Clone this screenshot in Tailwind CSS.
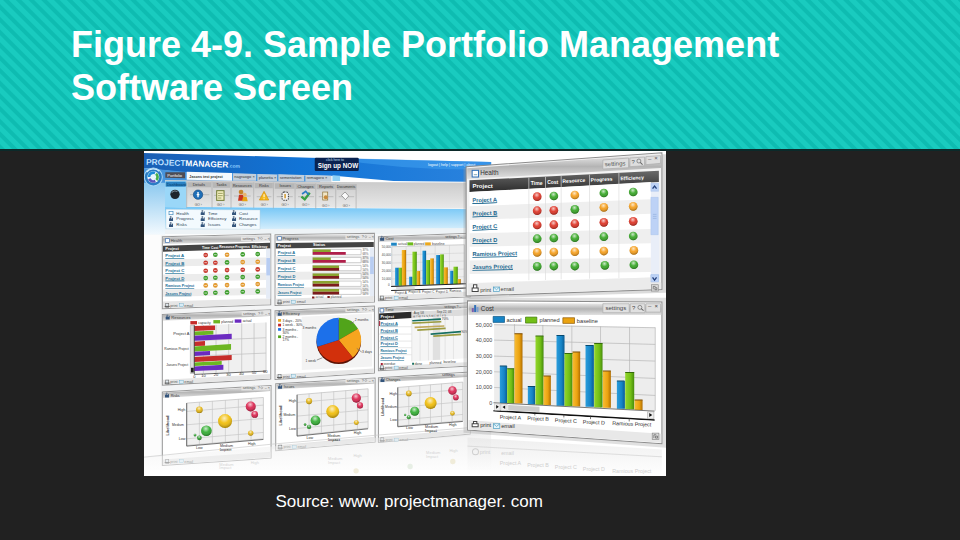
<!DOCTYPE html>
<html lang="en">
  <head>
    <meta charset="UTF-8" />
    <meta name="viewport" content="width=device-width, initial-scale=1.0" />
    <title>Sample Portfolio Management Software Screen</title>
    <script src="https://cdn.jsdelivr.net/npm/@tailwindcss/browser@4"></script>
  </head>
  <body class="min-h-screen bg-[#212121] font-['Liberation_Sans',Arial,sans-serif] text-white">
    <header
      class="bg-[repeating-linear-gradient(45deg,#0ebcb1_0px,#0ebcb1_3px,#19cbbf_4px,#19cbbf_8px,#0ebcb1_9px)] px-[71px] pt-[23px] pb-10"
    >
      <h1 class="text-[36px] leading-[43px] font-bold">
        Figure 4-9. Sample Portfolio Management Software Screen
      </h1>
    </header>

    <main class="border-t-2 border-[#0b2a2a]">
      <figure class="ml-[15%] w-[54.4%]">
        <svg viewBox="0 0 1566 975" class="block w-full bg-white" role="img" aria-label="Project dashboard">
          <defs>
            <linearGradient id="sky" x1="0" y1="0" x2="1" y2="0">
              <stop offset="0" stop-color="#1a5fb4" />
              <stop offset=".45" stop-color="#1174d6" />
              <stop offset="1" stop-color="#2b83de" />
            </linearGradient>
            <linearGradient id="strip" x1="0" y1="0" x2="0" y2="1">
              <stop offset="0" stop-color="#74c6f6" />
              <stop offset="1" stop-color="#e6f5fd" />
            </linearGradient>
            <linearGradient id="side" x1="0" y1="0" x2="0" y2="1">
              <stop offset="0" stop-color="#8cc9f0" />
              <stop offset="1" stop-color="#f4fafe" />
            </linearGradient>
            <linearGradient id="tools" x1="0" y1="0" x2="0" y2="1">
              <stop offset="0" stop-color="#c9c9c9" />
              <stop offset="1" stop-color="#e9e9e9" />
            </linearGradient>
            <linearGradient id="bar" x1="0" y1="0" x2="0" y2="1">
              <stop offset="0" stop-color="#eeeeee" />
              <stop offset=".5" stop-color="#b4b4b4" />
              <stop offset="1" stop-color="#e2e2e2" />
            </linearGradient>
            <linearGradient id="dark" x1="0" y1="0" x2="0" y2="1">
              <stop offset="0" stop-color="#6a6a6a" />
              <stop offset="1" stop-color="#2c2c2c" />
            </linearGradient>
            <linearGradient id="blue">
              <stop offset="0" stop-color="#2a9ddc" />
              <stop offset=".6" stop-color="#1684c6" />
              <stop offset="1" stop-color="#0a5c94" />
            </linearGradient>
            <linearGradient id="green">
              <stop offset="0" stop-color="#93d62c" />
              <stop offset=".6" stop-color="#72bf16" />
              <stop offset="1" stop-color="#468c0c" />
            </linearGradient>
            <linearGradient id="orange">
              <stop offset="0" stop-color="#f9bd35" />
              <stop offset=".6" stop-color="#eaa20f" />
              <stop offset="1" stop-color="#b06d02" />
            </linearGradient>
            <radialGradient id="shine" cx=".45" cy=".3" r=".7">
              <stop offset="0" stop-color="#fff" stop-opacity=".75" />
              <stop offset=".5" stop-color="#fff" stop-opacity=".1" />
              <stop offset="1" stop-color="#000" stop-opacity=".35" />
            </radialGradient>
            <linearGradient id="fade" x1="0" y1="0" x2="0" y2="1">
              <stop offset="0" stop-color="#e4e4e4" />
              <stop offset="1" stop-color="#ffffff" />
            </linearGradient>
            <g id="dot"><circle r="13" /><circle r="13" fill="url(#shine)" /></g>
            <g id="mini"><circle r="7" /><path d="M-4 0H4" stroke="#fff" stroke-width="2" /></g>
            <g id="ball"><circle r="10" /><circle r="10" fill="url(#shine)" /></g>
            <g id="bubbles">
              <use href="#ball" transform="translate(0 0)" fill="#e3b20c" />
              <use href="#ball" transform="translate(154 -10) scale(1.5)" fill="#d91c48" />
              <use href="#ball" transform="translate(166 14)" fill="#d91c48" />
              <use href="#ball" transform="translate(77 34) scale(2.1)" fill="#f0bb00" />
              <use href="#ball" transform="translate(21 63) scale(1.6)" fill="#2bab2b" />
              <use href="#ball" transform="translate(0 84) scale(.7)" fill="#2b9a2b" />
              <use href="#ball" transform="translate(-13 76) scale(.4)" fill="#2b9a2b" />
              <use href="#ball" transform="translate(154 70) scale(.8)" fill="#e3b20c" />
            </g>
            <g id="page">
              <rect width="9" height="12" fill="#dfe8ee" stroke="#777" stroke-width="2" />
              <path d="M-3 9H12" stroke="#555" stroke-width="3" />
            </g>
            <g id="people">
              <path d="M0 14V7L4 4L8 7L12 2V14Z" fill="#34557c" />
              <circle cx="5" cy="2" r="3" fill="#6c7f96" />
            </g>
            <g id="foot" font-size="11" fill="#555">
              <use href="#page" y="-10" />
              <text x="14">print</text>
              <rect x="41" y="-9" width="12" height="9" fill="#d8ecf6" stroke="#4a9cc0" />
              <text x="56">email</text>
            </g>
            <g id="ctl" font-size="11" fill="#555">
              <rect x="-4" y="-10" width="84" height="13" fill="#e4e4e4" />
              <text>settings</text>
              <text x="45">?</text>
              <circle cx="57" cy="-5" r="3" fill="none" stroke="#666" />
              <text x="66">– ×</text>
            </g>
          </defs>

          <!-- Application header -->
          <g transform="translate(-12 -15)">
            <path d="M12 21L510 35L1053 48V108L760 105L590 90L140 80L12 66Z" fill="url(#sky)" />
            <path d="M12 66L140 78L540 90V115H12Z" fill="#4794dc" />
            <path d="M560 35L1053 48V70Q800 75 560 35Z" fill="#3fa0f0" opacity=".55" />
            <path d="M12 110H75V268H12Z" fill="url(#side)" />
            <path d="M75 102L600 108L1053 110V188L75 182Z" fill="url(#tools)" />
            <path d="M75 182L1053 190V256L75 262Z" fill="url(#strip)" />
            <path d="M75 250L1053 246V266L75 264Z" fill="#eef3f6" />
            <g font-weight="bold" transform="rotate(2 18 56)">
              <text x="18" y="56" font-size="25" fill="#bfe0ff">PROJECT<tspan fill="#fff">MANAGER</tspan><tspan font-size="15" fill="#8ccbff">.com</tspan></text>
            </g>
            <circle cx="40" cy="93" r="27" fill="#2a7cc4" stroke="#a8d6f6" stroke-width="3" />
            <circle cx="40" cy="93" r="18" fill="#e8f6fc" />
            <g fill="none" stroke-width="8">
              <path d="M27 93A13 13 0 0 1 45 81" stroke="#1c8ad8" />
              <path d="M48 83A13 13 0 0 1 49 102" stroke="#49b04b" />
              <path d="M46 105A13 13 0 0 1 28 98" stroke="#5a55bd" />
            </g>
            <path d="M20 78A26 26 0 0 1 58 76" fill="none" stroke="#d6efff" stroke-width="4" />
            <rect x="524" y="35" width="132" height="40" rx="4" fill="#0a2350" />
            <text x="558" y="44" font-size="10" fill="#cfe4ff">click here to</text>
            <text x="533" y="65" font-size="19" font-weight="bold" fill="#fff">Sign up NOW</text>
            <text x="864" y="60" font-size="11" fill="#fff">logout | help | support | about</text>

            <!-- Tabs -->
            <path d="M76 79H135V97L76 95Z" fill="#4d4d55" />
            <path d="M140 77L276 81V104L140 101Z" fill="#f6fafd" />
            <path d="M279 82L348 84V104H279ZM352 84L411 86V105H352ZM415 85L492 87V106H415ZM496 87L574 89V107H496Z" fill="#c3cfdb" />
            <path d="M577 88L600 89V105H577Z" fill="#8ed0f5" />
            <g font-size="12" fill="#333">
              <text x="82" y="92" fill="#fff">Portfolio</text>
              <text x="148" y="95" font-weight="bold" font-size="11">Jasons test project</text>
              <text x="283" y="97">nagraogo ×</text>
              <text x="356" y="98">planetta ×</text>
              <text x="419" y="98">sementation</text>
              <text x="500" y="100">remagoro ×</text>
            </g>

            <!-- Toolbar -->
            <path d="M75 104H139V187L75 184Z" fill="#9ad7f8" />
            <path d="M77 107H137V122H77Z" fill="#2a82c4" />
            <path d="M143 109H213V124H143ZM219 109H270V125H219ZM276 110H338V126H276ZM344 111H398V127H344ZM404 112H463V128H404ZM467 113H525V129H467ZM530 114H584V130H530ZM590 115H647V131H590Z" fill="#b6b6b6" />
            <g stroke="#aaa" stroke-width="2">
              <path d="M140 107V185M216 107V185M273 108V186M341 109V186M400 110V187M465 111V187M527 112V188M587 113V188M648 114V188" />
              <path d="M150 146H208M222 148H266M282 150H332M350 152H394M410 152H458M474 152H522M536 152H580M596 152H642" />
            </g>
            <g font-size="12" fill="#333">
              <text x="80" y="119" fill="#063a66">Dashboard</text>
              <text x="158" y="121">Details</text>
              <text x="229" y="121">Tasks</text>
              <text x="278" y="122">Resources</text>
              <text x="357" y="123">Risks</text>
              <text x="418" y="123">Issues</text>
              <text x="472" y="125">Changes</text>
              <text x="537" y="126">Reports</text>
              <text x="590" y="126" font-size="11">Documents</text>
            </g>
            <g font-size="10" fill="#555">
              <text x="164" y="179">GO ›</text>
              <text x="231" y="179">GO ›</text>
              <text x="296" y="180">GO ›</text>
              <text x="362" y="180">GO ›</text>
              <text x="424" y="181">GO ›</text>
              <text x="486" y="181">GO ›</text>
              <text x="546" y="182">GO ›</text>
              <text x="608" y="182">GO ›</text>
            </g>
            <circle cx="105" cy="145" r="14" fill="#1f262c" />
            <path d="M95 140A12 12 0 0 1 112 137" stroke="#7a8a94" stroke-width="3" fill="none" />
            <circle cx="174" cy="146" r="14" fill="#1f6fb8" stroke="#174a80" stroke-width="2" />
            <path d="M174 138V154M170 146H178" stroke="#fff" stroke-width="4" />
            <rect x="230" y="134" width="22" height="29" fill="#f4efc0" stroke="#6f7a30" stroke-width="3" />
            <path d="M234 142H248M234 149H248M234 156H244" stroke="#6f7a30" stroke-width="2" />
            <circle cx="303" cy="138" r="7" fill="#c5852a" />
            <path d="M294 164L297 146H309L314 164Z" fill="#c8321e" />
            <circle cx="314" cy="146" r="6" fill="#e8b56e" />
            <path d="M306 166L309 153H320L323 166Z" fill="#e8a214" />
            <path d="M358 162L372 136L386 162Z" fill="#f5b91d" stroke="#d38a08" stroke-width="2" />
            <path d="M372 145V154M372 157V160" stroke="#fff" stroke-width="3" />
            <rect x="426" y="138" width="19" height="25" rx="6" fill="#f4f4f4" stroke="#333" stroke-width="3" stroke-dasharray="4 3" />
            <path d="M435 144V157" stroke="#c98a16" stroke-width="4" />
            <path d="M484 152L494 160L509 140" fill="none" stroke="#37a043" stroke-width="7" />
            <path d="M486 144L497 136L506 146" fill="none" stroke="#2a7cc4" stroke-width="5" />
            <rect x="548" y="138" width="15" height="24" fill="#f0e6c6" stroke="#8a6b2e" stroke-width="2" />
            <circle cx="557" cy="154" r="6" fill="#c98a3a" />
            <path d="M604 148L615 138L626 150L616 161Z" fill="#fafafa" stroke="#777" stroke-width="2" />

            <!-- Sub menu -->
            <path d="M78 190L360 192V250L78 248Z" fill="#f3fafe" stroke="#a9c7d9" />
            <rect x="87" y="196" width="12" height="10" fill="#fff" stroke="#3d86bb" stroke-width="2" />
            <use href="#people" x="87" y="211" />
            <use href="#people" x="87" y="229" />
            <use href="#people" x="182" y="193" />
            <use href="#people" x="182" y="211" />
            <use href="#people" x="182" y="229" />
            <use href="#people" x="276" y="193" />
            <use href="#people" x="276" y="211" />
            <use href="#people" x="276" y="229" />
            <g font-size="13" fill="#2a4254">
              <text x="109" y="206">Health</text>
              <text x="109" y="223">Progress</text>
              <text x="109" y="241">Risks</text>
              <text x="204" y="206">Time</text>
              <text x="204" y="223">Efficiency</text>
              <text x="204" y="241">Issues</text>
              <text x="297" y="206">Cost</text>
              <text x="297" y="223">Resource</text>
              <text x="297" y="241">Changes</text>
            </g>
          </g>

          <!-- Page surface behind the panels -->
          <path d="M0 251H1041V850L0 920Z" fill="#f4f5f6" />
          <path d="M0 251H50V914L0 920Z" fill="#fcfcfc" />

          <!-- Health, small -->
          <g transform="translate(33 237)">
            <path d="M22 20L347 12V224L22 236Z" fill="#fff" stroke="#9a9a9a" stroke-width="3" />
            <path d="M24 22L345 14V33L24 42Z" fill="url(#bar)" />
            <path d="M24 47L345 38V55L24 65Z" fill="#444" />
            <path d="M24 88L333 82V104L24 109ZM24 133L333 128V150L24 155ZM24 178L333 173V194L24 200Z" fill="#ececec" />
            <path d="M24 214L345 205V222L24 234Z" fill="#e6e6e6" />
            <path d="M333 56H346V206H333Z" fill="#e6ecf6" />
            <path d="M334 84H345V136H334Z" fill="#b8cdf2" />
            <rect x="31" y="26" width="12" height="11" fill="#fff" stroke="#3d6fae" stroke-width="2" />
            <use href="#ctl" x="262" y="30" />
            <use href="#foot" x="32" y="230" />
            <text x="47" y="37" font-size="12" fill="#444">Health</text>
            <g font-size="12" font-weight="bold" fill="#fff">
              <text x="31" y="60">Project</text>
              <g font-size="10">
                <text x="141" y="56">Time</text>
                <text x="168" y="56">Cost</text>
                <text x="193" y="55">Resource</text>
                <text x="241" y="54">Progress</text>
                <text x="290" y="53">Efficiency</text>
              </g>
            </g>
            <g font-size="13" font-weight="bold" fill="#1d6f96" class="underline">
              <a href="#"><text x="31" y="82">Project A</text></a>
              <a href="#"><text x="31" y="104">Project B</text></a>
              <a href="#"><text x="31" y="127">Project C</text></a>
              <a href="#"><text x="31" y="149">Project D</text></a>
              <a href="#"><text x="31" y="172" font-size="11">Ramious Project</text></a>
              <a href="#"><text x="31" y="194" font-size="11">Jasuns Project</text></a>
            </g>
            <g fill="#c8362b">
              <use href="#mini" x="152" y="75" /><use href="#mini" x="152" y="98" /><use href="#mini" x="181" y="98" />
              <use href="#mini" x="152" y="122" /><use href="#mini" x="181" y="121" /><use href="#mini" x="216" y="120" />
              <use href="#mini" x="263" y="119" /><use href="#mini" x="308" y="118" />
            </g>
            <g fill="#3c9d2b">
              <use href="#mini" x="181" y="74" /><use href="#mini" x="263" y="73" /><use href="#mini" x="308" y="72" />
              <use href="#mini" x="216" y="97" />
              <use href="#mini" x="152" y="144" /><use href="#mini" x="181" y="143" /><use href="#mini" x="216" y="142" />
              <use href="#mini" x="263" y="141" /><use href="#mini" x="308" y="140" />
              <use href="#mini" x="152" y="189" /><use href="#mini" x="181" y="188" /><use href="#mini" x="216" y="187" />
              <use href="#mini" x="263" y="185" /><use href="#mini" x="308" y="184" />
            </g>
            <g fill="#e2972a">
              <use href="#mini" x="216" y="74" /><use href="#mini" x="263" y="96" /><use href="#mini" x="308" y="95" />
              <use href="#mini" x="152" y="166" /><use href="#mini" x="181" y="166" /><use href="#mini" x="216" y="165" />
              <use href="#mini" x="263" y="164" /><use href="#mini" x="308" y="162" />
            </g>
          </g>

          <!-- Progress -->
          <g transform="translate(378 237)">
            <path d="M15 14L313 10V216L15 226Z" fill="#fff" stroke="#9a9a9a" stroke-width="3" />
            <path d="M17 16L311 12V29L17 34Z" fill="url(#bar)" />
            <path d="M17 39L311 36V51L17 55Z" fill="#444" />
            <path d="M17 79L298 76V99L17 103ZM17 126L298 123V147L17 150ZM17 173L298 170V192L17 196Z" fill="#ececec" />
            <path d="M17 206L311 198V214L17 224Z" fill="#e6e6e6" />
            <path d="M299 53H312V198H299Z" fill="#e6ecf6" />
            <path d="M300 80H311V132H300Z" fill="#b8cdf2" />
            <rect x="23" y="20" width="11" height="10" fill="#fff" stroke="#3d6fae" stroke-width="2" />
            <use href="#ctl" x="230" y="25" />
            <use href="#foot" x="24" y="220" />
            <text x="37" y="31" font-size="12" fill="#444">Progress</text>
            <g font-size="12" font-weight="bold" fill="#fff">
              <text x="22" y="51">Project</text>
              <text x="129" y="49">Status</text>
            </g>
            <g font-size="12" font-weight="bold" fill="#1d6f96" class="underline">
              <a href="#"><text x="23" y="73">Project A</text></a>
              <a href="#"><text x="23" y="97">Project B</text></a>
              <a href="#"><text x="23" y="121">Project C</text></a>
              <a href="#"><text x="23" y="145">Project D</text></a>
              <a href="#"><text x="23" y="168" font-size="10">Ramious Project</text></a>
              <a href="#"><text x="23" y="192" font-size="10">Jasuns Project</text></a>
            </g>
            <path d="M128 58H273V74H128ZM128 82H273V98H128ZM128 106H273V122H128ZM128 130H273V146H128ZM128 153H273V169H128ZM128 177H273V193H128Z" fill="#fff" stroke="#b5b5b5" stroke-width="2" />
            <path d="M128 58H182V66H128ZM128 82H182V90H128ZM128 106H207V114H128ZM128 130H207V138H128ZM128 153H207V161H128ZM128 177H207V185H128Z" fill="#8aa32f" />
            <path d="M128 66H227V74H128ZM128 90H227V98H128Z" fill="#b01f4a" />
            <path d="M128 114H207V122H128ZM128 138H207V146H128ZM128 161H207V169H128ZM128 185H207V193H128Z" fill="#7c1c1c" />
            <g font-size="9" fill="#555">
              <text x="277" y="64">37%</text><text x="277" y="74">68%</text>
              <text x="277" y="88">37%</text><text x="277" y="98">68%</text>
              <text x="277" y="112">54%</text><text x="277" y="122">54%</text>
              <text x="277" y="136">54%</text><text x="277" y="146">54%</text>
              <text x="277" y="160">54%</text><text x="277" y="170">54%</text>
              <text x="277" y="184">54%</text><text x="277" y="194">54%</text>
              <text x="136" y="205">actual</text><text x="182" y="204">planned</text>
            </g>
            <path d="M126 199H133V205H126ZM172 198H179V204H172Z" fill="#7c1c1c" />
          </g>

          <!-- Cost and Time, small -->
          <g transform="translate(678 237)">
            <path d="M25 20L300 10V200L25 212Z" fill="#fff" stroke="#9a9a9a" stroke-width="3" />
            <path d="M27 22L300 12V26L27 36Z" fill="url(#bar)" />
            <path d="M27 196L300 184V199L27 210Z" fill="#e6e6e6" />
            <path d="M65 50L283 44V160L65 168Z" fill="#eeeeee" stroke="#bbb" stroke-width="2" />
            <path d="M65 75L283 69M65 99L283 93M65 124L283 117M65 147L283 140M108 49V166M152 48V165M195 47V163M238 46V162" stroke="#bbb" />
            <path d="M63 38H80V47H63Z" fill="#2086c4" /><path d="M112 37H129V46H112Z" fill="#6cbb1c" /><path d="M165 37H182V46H165Z" fill="#eca81c" />
            <g fill="url(#blue)">
              <rect x="75" y="113" width="11" height="54" /><rect x="117" y="140" width="10" height="26" />
              <rect x="157" y="62" width="11" height="102" /><rect x="198" y="75" width="12" height="88" />
              <rect x="240" y="122" width="10" height="40" />
            </g>
            <g fill="url(#green)">
              <rect x="86" y="113" width="10" height="54" /><rect x="127" y="65" width="13" height="101" />
              <rect x="168" y="90" width="12" height="74" /><rect x="210" y="73" width="11" height="90" />
              <rect x="250" y="110" width="13" height="52" />
            </g>
            <g fill="url(#orange)">
              <rect x="95" y="60" width="13" height="107" /><rect x="140" y="123" width="10" height="42" />
              <rect x="180" y="85" width="11" height="79" /><rect x="221" y="112" width="12" height="51" />
              <rect x="263" y="147" width="9" height="15" />
            </g>
            <path d="M63 169L288 161M63 181L288 174" stroke="#222" stroke-width="3" />
            <path d="M78 171H134V178H78Z" fill="#ddd" />
            <use href="#people" x="30" y="18" />
            <use href="#foot" x="31" y="208" />
            <g font-size="10" fill="#444">
              <text x="46" y="31" font-size="12">Cost</text>
              <text x="225" y="25">settings ? –</text>
              <text x="84" y="46">actual</text><text x="131" y="46" font-size="9">planned</text><text x="186" y="45">baseline</text>
              <text x="35" y="54" font-size="9">50,000</text><text x="35" y="78" font-size="9">40,000</text><text x="35" y="102" font-size="9">30,000</text>
              <text x="35" y="127" font-size="9">20,000</text><text x="35" y="150" font-size="9">10,000</text><text x="54" y="169" font-size="9">0</text>
              <text x="74" y="191" font-size="9">Project A</text><text x="115" y="190" font-size="9">Project B</text><text x="156" y="189" font-size="9">Project C</text>
              <text x="197" y="188" font-size="9">Project D</text><text x="238" y="187" font-size="9">Ramious</text>
            </g>

            <path d="M25 234L300 218V408L25 422Z" fill="#fff" stroke="#9a9a9a" stroke-width="3" />
            <path d="M27 236L300 220V234L27 247Z" fill="url(#bar)" />
            <path d="M27 250L125 245V264L27 270Z" fill="#2c2c2c" />
            <path d="M125 245L300 236V256L125 264Z" fill="#dcdcdc" />
            <path d="M125 264L300 256V384L125 394Z" fill="#f5f5f5" />
            <path d="M188 262L210 261V389L188 390Z" fill="#e0e0e0" />
            <path d="M125 245V394M150 256V392M175 255V391M225 253V388M250 252V387M27 290H125M27 312H125M27 333H125M27 353H125M27 374H125" stroke="#ddd" stroke-width="2" />
            <path d="M27 410L300 396V406L27 420Z" fill="#e6e6e6" />
            <rect x="30" y="236" width="11" height="10" fill="#fff" stroke="#3d6fae" stroke-width="2" />
            <use href="#foot" x="31" y="417" />
            <g stroke-width="5" stroke-linecap="square">
              <path d="M129 272L210 267M184 312L270 305" stroke="#176f62" />
              <path d="M129 279L211 275M144 300L224 295M192 318L270 313" stroke="#9b9c42" />
              <path d="M136 292L220 288" stroke="#c2a95c" />
            </g>
            <g font-size="10" fill="#444">
              <text x="45" y="244" font-size="12">Time</text>
              <text x="222" y="233">settings ? –</text>
              <text x="31" y="263" font-size="12" font-weight="bold" fill="#fff">Project</text>
              <text x="131" y="252" font-size="9">Aug '08</text><text x="200" y="248" font-size="9">Sep 22, 08</text>
              <text x="129" y="262" font-size="8" transform="rotate(-2 129 262)">M T W T F S S M T W T F S</text>
              <text x="215" y="270">70%</text><text x="273" y="308">90%</text>
              <text x="40" y="406">overdue</text><text x="134" y="404">done</text><text x="178" y="401">planned</text><text x="220" y="399">baseline</text>
            </g>
            <path d="M32 399H38V405H32ZM27 272H30V288H27Z" fill="#a31f36" /><path d="M126 398H132V404H126Z" fill="#176f62" />
            <g font-size="12" font-weight="bold" fill="#1d6f96" class="underline">
              <a href="#"><text x="31" y="284">Project A</text></a>
              <a href="#"><text x="31" y="305">Project B</text></a>
              <a href="#"><text x="31" y="326">Project C</text></a>
              <a href="#"><text x="31" y="346">Project D</text></a>
              <a href="#"><text x="31" y="366" font-size="10">Ramious Project</text></a>
              <a href="#"><text x="31" y="387" font-size="10">Jasuns Project</text></a>
            </g>
          </g>

          <!-- Resources -->
          <g transform="translate(33 462)">
            <path d="M22 28L347 14V222L22 240Z" fill="#fff" stroke="#9a9a9a" stroke-width="3" />
            <path d="M24 30L345 16V33L24 47Z" fill="url(#bar)" />
            <path d="M24 224L345 207V220L24 238Z" fill="#e6e6e6" />
            <path d="M118 62L333 52V198L118 206Z" fill="#f0f0f0" />
            <path d="M145 60V205M183 59V203M221 57V202M260 55V201M297 54V199M333 52V198M118 107L333 98M118 153L333 144" stroke="#bdbdbd" stroke-width="2" />
            <path d="M106 61H117V205H106Z" fill="#ddd" stroke="#777" />
            <path d="M108 188H116V202H108Z" fill="#222" />
            <path d="M106 48H126V58H106Z" fill="#c62d2a" /><path d="M175 45H195V55H175Z" fill="#6cb622" /><path d="M239 43H259V53H239Z" fill="#6b2bc0" />
            <path d="M118 63L180 61V75L118 78ZM118 110L150 108V122L118 123ZM118 156L230 150V165L118 171Z" fill="#c62d2a" />
            <path d="M118 79L175 77V88L118 91ZM118 124L228 117V134L118 139ZM118 172L200 168V179L118 183Z" fill="#6cb622" />
            <path d="M118 92L230 86V102L118 107ZM118 140L165 138V150L118 153ZM118 184L205 179V194L118 198Z" fill="#6b2bc0" />
            <path d="M118 60V208L333 198" stroke="#222" stroke-width="2" fill="none" />
            <use href="#people" x="32" y="29" />
            <use href="#ctl" x="264" y="29" />
            <use href="#foot" x="32" y="235" />
            <g font-size="12" fill="#333">
              <text x="49" y="41">Resources</text>
              <g font-size="10"><text x="130" y="56">capacity</text><text x="199" y="53">planned</text><text x="263" y="51">actual</text></g>
              <text x="55" y="90">Project A</text>
              <text x="28" y="136" font-size="10">Ramious Project</text>
              <text x="34" y="184" font-size="10">Jasuns Project</text>
              <text x="115" y="218">0</text><text x="139" y="216">10</text><text x="176" y="214">20</text>
              <text x="214" y="212">30</text><text x="253" y="210">40</text><text x="290" y="208">50</text><text x="324" y="205">60</text>
            </g>
          </g>

          <!-- Efficiency -->
          <g transform="translate(378 462)">
            <path d="M15 17L313 3V204L15 223Z" fill="#fff" stroke="#9a9a9a" stroke-width="3" />
            <path d="M17 19L311 5V21L17 34Z" fill="url(#bar)" />
            <path d="M17 208L311 190V202L17 221Z" fill="#e6e6e6" />
            <path d="M95 35L306 25V184L95 195Z" fill="#f3f3f3" />
            <circle cx="206" cy="110" r="67" fill="#5b1205" />
            <path d="M206 105V38A67 67 0 0 1 264 71Z" fill="#51a41a" />
            <path d="M206 105L264 71A67 67 0 0 1 248 157Z" fill="#f6a51f" />
            <path d="M206 105L248 157A67 67 0 0 1 142 125Z" fill="#d2300c" />
            <path d="M206 105L142 125A67 67 0 0 1 206 38Z" fill="#1c70ea" />
            <path d="M24 42H33V50H24Z" fill="#e6a81f" /><path d="M24 56H33V64H24Z" fill="#c62d2a" />
            <path d="M24 69H33V77H24Z" fill="#1c70ea" /><path d="M24 91H33V99H24Z" fill="#51a41a" />
            <use href="#people" x="23" y="18" />
            <use href="#ctl" x="230" y="18" />
            <use href="#foot" x="24" y="218" />
            <g font-size="11" fill="#333">
              <text x="38" y="29" font-size="12">Efficiency</text>
              <text x="37" y="50" font-size="10">3 days - 20%</text><text x="37" y="64" font-size="10">1 week - 30%</text>
              <text x="37" y="77" font-size="10">3 months -</text><text x="37" y="87" font-size="10">30%</text>
              <text x="37" y="99" font-size="10">2 months -</text><text x="37" y="109" font-size="10">17%</text>
              <text x="97" y="71" font-size="10">3 months</text><text x="254" y="49" font-size="10">2 months</text>
              <text x="106" y="172" font-size="10">1 week</text><text x="276" y="145" font-size="10">3 days</text>
            </g>
            <path d="M140 165L157 158M275 141L260 130M252 50L240 56" stroke="#666" stroke-width="2" />
          </g>

          <!-- Risks -->
          <g transform="translate(-12 681)">
            <path d="M67 42L393 22V240L67 262Z" fill="#fff" stroke="#9a9a9a" stroke-width="3" />
            <path d="M69 44L391 24V39L69 60Z" fill="url(#bar)" />
            <path d="M69 244L391 221V238L69 260Z" fill="#e6e6e6" />
            <path d="M140 75L370 58V182L140 202Z" fill="#f0f0f0" stroke="#bbb" stroke-width="2" />
            <path d="M178 72V199M217 69V195M256 66V192M295 63V189M333 60V185M140 100L370 81M140 140L370 121M140 182L370 163" stroke="#c4c4c4" stroke-width="2" />
            <path d="M140 75V204L370 184" stroke="#333" stroke-width="2" fill="none" />
            <use href="#bubbles" x="178" y="95" />
            <use href="#people" x="75" y="44" />
            <use href="#ctl" x="308" y="34" />
            <use href="#foot" x="77" y="254" />
            <g font-size="11" fill="#333">
              <text x="92" y="56">Risks</text>
              <text x="113" y="98">High</text><text x="96" y="143" font-size="10">Medium</text><text x="116" y="187">Low</text>
              <text x="168" y="214">Low</text><text x="240" y="207">Medium</text><text x="324" y="200">High</text>
              <text x="239" y="220" font-weight="bold">Impact</text>
              <text transform="translate(88 172) rotate(-90)" font-weight="bold" font-size="12">Likelihood</text>
            </g>
          </g>

          <!-- Issues -->
          <g transform="translate(320 655)">
            <path d="M75 43L373 26V218L75 244Z" fill="#fff" stroke="#9a9a9a" stroke-width="3" />
            <path d="M77 45L371 28V42L77 60Z" fill="url(#bar)" />
            <path d="M77 227L371 202V216L77 242Z" fill="#e6e6e6" />
            <path d="M139 76L352 58V176L139 198Z" fill="#f0f0f0" stroke="#bbb" stroke-width="2" />
            <path d="M175 73V194M212 69V190M249 66V186M285 63V182M320 60V179M139 99L352 81M139 140L352 121M139 177L352 157" stroke="#c4c4c4" stroke-width="2" />
            <path d="M139 76V200L352 178" stroke="#333" stroke-width="2" fill="none" />
            <use href="#bubbles" transform="translate(175 95) scale(.92)" />
            <use href="#people" x="82" y="44" />
            <use href="#ctl" x="288" y="38" />
            <use href="#foot" x="84" y="237" />
            <g font-size="11" fill="#333">
              <text x="99" y="57">Issues</text>
              <text x="114" y="99">High</text><text x="98" y="141" font-size="10">Medium</text><text x="115" y="182">Low</text>
              <text x="167" y="209">Low</text><text x="230" y="202">Medium</text><text x="309" y="195">High</text>
              <text x="232" y="214" font-weight="bold">Impact</text>
              <text transform="translate(93 168) rotate(-90)" font-weight="bold" font-size="12">Likelihood</text>
            </g>
          </g>

          <!-- Changes -->
          <g transform="translate(498 681)">
            <path d="M205 -1L480 -18V168L205 193Z" fill="#fff" stroke="#9a9a9a" stroke-width="3" />
            <path d="M207 1L480 -16V-4L207 13Z" fill="url(#bar)" />
            <path d="M207 177L480 153V166L207 191Z" fill="#e6e6e6" />
            <path d="M263 28L458 12V128L263 144Z" fill="#f0f0f0" stroke="#bbb" stroke-width="2" />
            <path d="M296 26V140M329 23V138M361 20V135M394 17V132M426 15V130M263 50L458 34M263 88L458 71M263 126L458 109" stroke="#c4c4c4" stroke-width="2" />
            <path d="M263 28V146L458 130" stroke="#333" stroke-width="2" fill="none" />
            <use href="#bubbles" transform="translate(296 46) scale(.85)" />
            <use href="#people" x="211" y="-2" />
            <use href="#foot" x="212" y="189" />
            <g font-size="11" fill="#333">
              <text x="227" y="9">Changes</text><text x="396" y="-5">settings</text>
              <text x="238" y="50">High</text><text x="225" y="90" font-size="10">Medium</text><text x="240" y="129">Low</text>
              <text x="288" y="154">Low</text><text x="345" y="149">Medium</text><text x="417" y="144">High</text>
              <text x="345" y="161" font-weight="bold">Impact</text>
              <text transform="translate(222 114) rotate(-90)" font-weight="bold" font-size="11">Likelihood</text>
            </g>
          </g>

          <!-- Floor reflection -->
          <path d="M0 918L1041 832V975H0Z" fill="url(#fade)" opacity=".5" />
          <path d="M0 918L385 879L700 852L972 830" fill="none" stroke="#c8c8c8" stroke-width="2" />
          <g font-size="12" fill="#d4d4d4">
            <text x="226" y="955">Impact</text><text x="226" y="944">Medium</text><text x="320" y="938">High</text>
            <text x="552" y="938">Impact</text><text x="552" y="926">Medium</text><text x="628" y="918">High</text>
            <text x="846" y="921">Impact</text><text x="846" y="909">Medium</text><text x="916" y="902">High</text>
          </g>
          <g fill="#ece6cc" opacity=".7">
            <circle cx="636" cy="959" r="8" /><circle cx="926" cy="931" r="8" /><circle cx="798" cy="946" r="8" fill="#dfeadc" />
          </g>

          <!-- Health, large -->
          <g transform="translate(948 -15)">
            <path d="M30 458L618 440V25H606L10 66V450Z" fill="#999" opacity=".35" />
            <path d="M18 62L605 20V430L18 450Z" fill="#f4f4f4" stroke="#8c8c8c" stroke-width="3" />
            <path d="M21 67L603 24V66L21 99Z" fill="url(#bar)" />
            <path d="M28 103L596 74V108L28 138Z" fill="url(#dark)" />
            <path d="M28 138L572 108V394L28 411Z" fill="#fff" />
            <path d="M28 181L572 160V203L28 222ZM28 262L572 249V292L28 302ZM28 343L572 334V378L28 384Z" fill="#efefef" />
            <path d="M206 95V403M256 93V402M303 90V400M388 86V398M476 81V396" stroke="#dcdcdc" stroke-width="2" />
            <path d="M572 110H597V410H572Z" fill="#e9eef8" />
            <path d="M572 112H595V136H572ZM572 154H594V266H572ZM572 386H595V408H572Z" fill="#bdd2f6" stroke="#9cb8e6" />
            <path d="M577 128L583 120L589 128M577 394L583 402L589 394" fill="none" stroke="#24427c" stroke-width="4" />
            <path d="M578 205H589M578 211H589M578 217H589" stroke="#93aede" stroke-width="2" />
            <path d="M428 42L505 36V65L428 69ZM509 36L553 33V59L509 62ZM557 32L601 29V52L557 56Z" fill="#dedede" stroke="#aaa" stroke-width="2" />
            <g fill="#555" font-size="18">
              <text x="434" y="61" transform="rotate(-3 434 61)">settings</text>
              <text x="514" y="55">?</text>
              <text x="563" y="45">–</text><text x="582" y="43">×</text>
            </g>
            <circle cx="536" cy="45" r="6" fill="none" stroke="#666" stroke-width="2" /><path d="M540 49L547 56" stroke="#666" stroke-width="3" />
            <rect x="36" y="73" width="19" height="20" fill="#fff" stroke="#2f6fb8" stroke-width="3" />
            <path d="M41 86H51" stroke="#8ab" stroke-width="3" />
            <text x="60" y="87" font-size="19" fill="#333">Health</text>
            <g font-weight="bold" font-size="18" fill="#fff">
              <text x="37" y="127">Project</text>
              <g font-size="15">
                <text x="212" y="116">Time</text>
                <text x="261" y="113">Cost</text>
                <text x="307" y="111" transform="rotate(-3 307 111)">Resource</text>
                <text x="392" y="107" transform="rotate(-3 392 107)">Progress</text>
                <text x="481" y="103" transform="rotate(-3 481 103)">Efficiency</text>
              </g>
            </g>
            <g font-size="17" font-weight="bold" fill="#1a668e" class="underline">
              <a href="#"><text x="37" y="169" transform="rotate(-2 37 169)">Project A</text></a>
              <a href="#"><text x="37" y="209" transform="rotate(-2 37 209)">Project B</text></a>
              <a href="#"><text x="37" y="249" transform="rotate(-2 37 249)">Project C</text></a>
              <a href="#"><text x="37" y="289" transform="rotate(-1 37 289)">Project D</text></a>
              <a href="#"><text x="37" y="330" transform="rotate(-1 37 330)">Ramious Project</text></a>
              <a href="#"><text x="37" y="369" transform="rotate(-1 37 369)">Jasuns Project</text></a>
            </g>
            <g fill="#dc2b1c">
              <use href="#dot" x="231" y="152" /><use href="#dot" x="231" y="194" /><use href="#dot" x="281" y="193" />
              <use href="#dot" x="231" y="237" /><use href="#dot" x="281" y="236" /><use href="#dot" x="344" y="233" />
              <use href="#dot" x="431" y="229" /><use href="#dot" x="519" y="226" />
            </g>
            <g fill="#2fa31d">
              <use href="#dot" x="281" y="150" /><use href="#dot" x="431" y="141" /><use href="#dot" x="519" y="138" />
              <use href="#dot" x="344" y="190" />
              <use href="#dot" x="231" y="278" /><use href="#dot" x="281" y="276" /><use href="#dot" x="344" y="275" />
              <use href="#dot" x="431" y="272" /><use href="#dot" x="519" y="270" />
              <use href="#dot" x="231" y="361" /><use href="#dot" x="281" y="360" /><use href="#dot" x="344" y="360" />
              <use href="#dot" x="434" y="358" /><use href="#dot" x="521" y="356" />
            </g>
            <g fill="#f59a12">
              <use href="#dot" x="344" y="147" /><use href="#dot" x="431" y="184" /><use href="#dot" x="519" y="181" />
              <use href="#dot" x="231" y="319" /><use href="#dot" x="281" y="318" /><use href="#dot" x="344" y="317" />
              <use href="#dot" x="431" y="315" /><use href="#dot" x="521" y="313" />
            </g>
            <path d="M24 412L572 394L603 410V428L24 447Z" fill="#ebebeb" />
            <path d="M40 426V416H50V426M36 426H54V436H36Z" fill="#fff" stroke="#444" stroke-width="3" />
            <rect x="100" y="423" width="18" height="13" fill="#e4f4fb" stroke="#4a9cc0" stroke-width="2" />
            <path d="M100 423L109 431L118 423" fill="none" stroke="#4a9cc0" stroke-width="2" />
            <g font-size="17" fill="#444"><text x="60" y="437">print</text><text x="121" y="435">email</text></g>
            <rect x="574" y="416" width="20" height="19" fill="#ddd" stroke="#888" stroke-width="2" />
            <path d="M579 430V421H586M584 425H590V431H584Z" fill="none" stroke="#555" stroke-width="2" />
            <path d="M572 386H595V408H572Z" fill="#bdd2f6" stroke="#9cb8e6" />
            <path d="M577 394L583 402L589 394" fill="none" stroke="#24427c" stroke-width="4" />
          </g>

          <!-- Cost, large -->
          <g transform="translate(948 435)">
            <path d="M10 5H618V455L10 410Z" fill="#999" opacity=".3" />
            <path d="M22 14L605 18V443L22 402Z" fill="#fff" stroke="#8c8c8c" stroke-width="3" />
            <path d="M25 20L603 23V57H25Z" fill="url(#bar)" />
            <path d="M428 23H507V50H428ZM510 23H554V50H510ZM557 23H601V48H557Z" fill="#e0e0e0" stroke="#aaa" stroke-width="2" />
            <g fill="#444" font-size="18">
              <text x="436" y="42">settings</text><text x="515" y="42">?</text><text x="563" y="36">–</text><text x="583" y="37">×</text>
            </g>
            <circle cx="539" cy="34" r="6" fill="none" stroke="#666" stroke-width="2" /><path d="M543 38L550 44" stroke="#666" stroke-width="3" />
            <path d="M35 36H41V48H35Z" fill="#7c5fae" /><path d="M42 27H48V48H42Z" fill="#2f6fb8" /><path d="M49 33H55V48H49Z" fill="#7c9fd0" />
            <text x="62" y="44" font-size="19" fill="#333">Cost</text>
            <path d="M102 83L585 94V344L102 320Z" fill="#ededed" />
            <path d="M102 86L585 95M102 132L585 145M102 180L585 195M102 227L585 247M102 274L585 298M163 84V322M248 87V326M335 89V330M421 91V335M508 93V340M585 94V344" stroke="#b4b4b4" stroke-width="2" />
            <path d="M99 61H133V79H99Z" fill="#1684c6" stroke="#084e7c" stroke-width="2" />
            <path d="M196 63H230V81H196Z" fill="#72bf16" stroke="#3b720b" stroke-width="2" />
            <path d="M308 65H343V82H308Z" fill="#eaa20f" stroke="#8a5503" stroke-width="2" />
            <g font-size="17" fill="#333">
              <text x="139" y="78">actual</text><text x="238" y="79">planned</text><text x="350" y="80">baseline</text>
            </g>
            <g font-size="16" fill="#444" text-anchor="end">
              <text x="96" y="92">50,000</text><text x="96" y="138">40,000</text><text x="96" y="186">30,000</text>
              <text x="96" y="233">20,000</text><text x="96" y="280">10,000</text><text x="96" y="328">0</text>
            </g>
            <g fill="url(#blue)">
              <rect x="119" y="210" width="22" height="111" /><rect x="203" y="271" width="22" height="54" />
              <rect x="289" y="118" width="24" height="211" /><rect x="376" y="148" width="25" height="184" />
              <rect x="470" y="255" width="24" height="83" />
            </g>
            <g fill="url(#green)">
              <rect x="141" y="218" width="21" height="104" /><rect x="226" y="120" width="24" height="206" />
              <rect x="313" y="172" width="24" height="158" /><rect x="402" y="142" width="25" height="192" />
              <rect x="495" y="229" width="27" height="111" />
            </g>
            <g fill="url(#orange)">
              <rect x="163" y="113" width="24" height="209" /><rect x="250" y="240" width="22" height="87" />
              <rect x="337" y="168" width="23" height="163" /><rect x="428" y="225" width="24" height="110" />
              <rect x="523" y="312" width="24" height="30" />
            </g>
            <path d="M119 210H140M203 271H225M289 118H312M376 148H400M470 255H493" stroke="#06486f" stroke-width="3" />
            <path d="M141 218H162M226 120H250M313 172H337M402 142H427M495 229H522" stroke="#356b09" stroke-width="3" />
            <path d="M163 113H187M250 240H272M337 168H360M428 225H452M523 312H547" stroke="#7d4c02" stroke-width="3" />
            <path d="M102 321L583 345V372L102 344Z" fill="#fff" />
            <path d="M100 320L583 345" stroke="#333" stroke-width="2" />
            <path d="M100 344L583 372" stroke="#111" stroke-width="5" />
            <path d="M103 323H120V343H103ZM122 324H141V344H122Z" fill="#eee" stroke="#999" />
            <path d="M108 327L116 332L108 338ZM135 328L127 333L135 339Z" fill="#111" />
            <path d="M144 327L238 332V348L144 343Z" fill="#ccc" />
            <path d="M562 347H581V368H562Z" fill="#eee" stroke="#666" /><path d="M567 351L576 357L567 363Z" fill="#111" />
            <path d="M25 372L100 378L603 413V440L25 400Z" fill="#e8e8e8" />
            <path d="M100 347L583 374V404L100 378Z" fill="#fff" />
            <path d="M224 348V358M311 354V364M391 359V369M507 366V376" stroke="#333" stroke-width="2" />
            <g font-size="16" fill="#222">
              <text x="119" y="368" transform="rotate(2 119 368)">Project A</text>
              <text x="201" y="372" transform="rotate(2 201 372)">Project B</text>
              <text x="284" y="378" transform="rotate(2 284 378)">Project C</text>
              <text x="368" y="383" transform="rotate(2 368 383)">Project D</text>
              <text x="456" y="387" transform="rotate(2 456 387)">Ramious Project</text>
            </g>
            <path d="M40 383V376H50V383M36 383H54V392H36Z" fill="#fff" stroke="#444" stroke-width="3" />
            <rect x="100" y="383" width="19" height="14" fill="#e4f4fb" stroke="#4a9cc0" stroke-width="2" />
            <path d="M100 383L109 391L119 383" fill="none" stroke="#4a9cc0" stroke-width="2" />
            <g font-size="17" fill="#333"><text x="60" y="393">print</text><text x="123" y="397">email</text></g>
            <rect x="576" y="411" width="20" height="19" fill="#ddd" stroke="#888" stroke-width="2" />
            <path d="M581 426V416H588M586 420H592V426H586Z" fill="none" stroke="#555" stroke-width="2" />
            <path d="M22 424L605 460V540H22Z" fill="url(#fade)" opacity=".6" />
            <path d="M22 450L605 482" stroke="#d0d0d0" stroke-width="2" />
            <g font-size="16" fill="#cfcfcf">
              <text x="59" y="474">print</text><text x="123" y="478">email</text>
              <text x="119" y="507">Project A</text><text x="201" y="512">Project B</text><text x="284" y="518">Project C</text>
              <text x="368" y="524">Project D</text><text x="456" y="532">Ramious Project</text>
            </g>
            <circle cx="46" cy="467" r="9" fill="none" stroke="#cfcfcf" stroke-width="3" />
          </g>
        </svg>
        <figcaption class="mt-3 pl-2 text-center text-[17px] leading-[27px]">
          Source: www. projectmanager. com
        </figcaption>
      </figure>
    </main>
  </body>
</html>
